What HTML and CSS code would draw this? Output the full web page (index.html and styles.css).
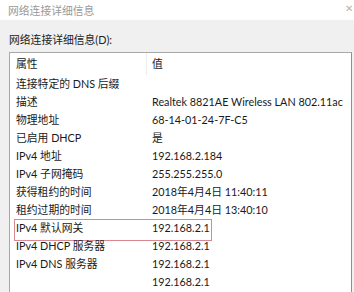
FILE: index.html
```html
<!DOCTYPE html>
<html>
<head>
    <meta charset="utf-8">
    <title>网络连接详细信息</title>
    <link rel="stylesheet" href="styles.css">
</head>
<body>
    <div class="titlebar">
        <span class="title">网络连接详细信息</span>
        <span class="close">&#x2715;</span>
    </div>
    <div class="panel">
        <div class="label">网络连接详细信息(D):</div>
        <div class="list">
            <div class="row head">
                <div class="name">属性</div>
                <div class="value">值</div>
            </div>
            <div class="row"><div class="name">连接特定的 DNS 后缀</div><div class="value"></div></div>
            <div class="row"><div class="name">描述</div><div class="value">Realtek 8821AE Wireless LAN 802.11ac</div></div>
            <div class="row"><div class="name">物理地址</div><div class="value">68-14-01-24-7F-C5</div></div>
            <div class="row"><div class="name">已启用 DHCP</div><div class="value">是</div></div>
            <div class="row"><div class="name">IPv4 地址</div><div class="value">192.168.2.184</div></div>
            <div class="row"><div class="name">IPv4 子网掩码</div><div class="value">255.255.255.0</div></div>
            <div class="row"><div class="name">获得租约的时间</div><div class="value">2018年4月4日 11:40:11</div></div>
            <div class="row"><div class="name">租约过期的时间</div><div class="value">2018年4月4日 13:40:10</div></div>
            <div class="row marked"><div class="name">IPv4 默认网关</div><div class="value">192.168.2.1</div><div class="mark"></div></div>
            <div class="row"><div class="name">IPv4 DHCP 服务器</div><div class="value">192.168.2.1</div></div>
            <div class="row"><div class="name">IPv4 DNS 服务器</div><div class="value">192.168.2.1</div></div>
            <div class="row"><div class="name"></div><div class="value">192.168.2.1</div></div>
        </div>
    </div>
</body>
</html>
```

FILE: styles.css
```css
html {
    overflow: hidden;
}

body {
    margin: 0;
    background-color: #fff;
    font-family: Lato, "Noto Sans CJK SC", sans-serif;
    font-size: 10.8px;
    color: #1a1a1a;
    overflow: hidden;
    height: 292px;
}

.titlebar {
    height: 20px;
    display: flex;
    align-items: center;
    justify-content: space-between;
    padding: 0 0 0 8px;
}

.title {
    color: #9a9a9a;
}

.close {
    color: #b4b4b4;
    font-size: 10px;
    margin-right: 1px;
    margin-top: -5px;
}

.panel {
    background-color: #f0f0f0;
    padding: 10px 2px 0 9px;
    height: 262px;
    overflow: hidden;
}

.label {
    height: 22px;
    line-height: 20px;
    color: #222;
}

.list {
    background-color: #fff;
    border: 1px solid #a8a8a8;
    border-right-color: #8e8e8e;
    border-bottom: none;
    height: 260px;
}

.row {
    display: flex;
    height: 18px;
    line-height: 18px;
    position: relative;
    white-space: nowrap;
}

.row.head {
    height: 22px;
    line-height: 22px;
}

.name {
    flex: 0 0 auto;
    width: 131px;
    padding-left: 6px;
}

.head .name {
    border-right: 1px solid #ececec;
    width: 130px;
}

.value {
    padding-left: 5px;
}

.mark {
    position: absolute;
    left: 4px;
    top: 0;
    width: 196px;
    height: 20px;
    border: 1px solid #d9888f;
}
```
